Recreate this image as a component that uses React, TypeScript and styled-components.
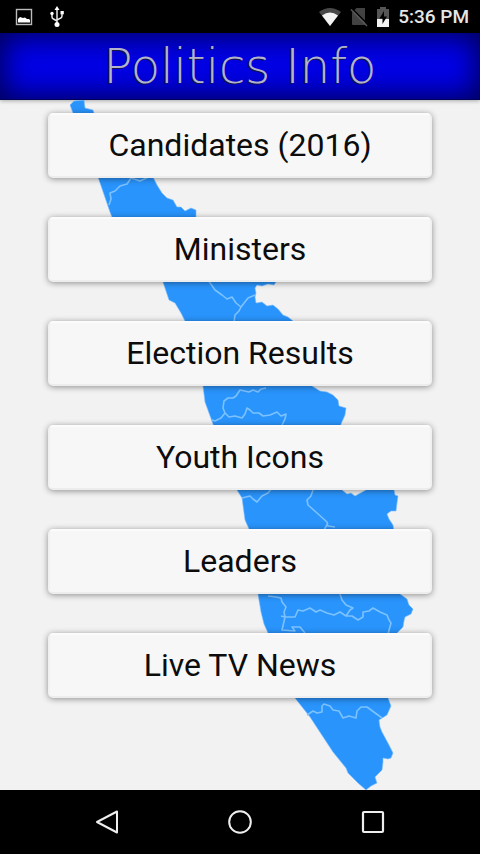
import React from 'react';
import styled, { createGlobalStyle } from 'styled-components';

const GlobalStyle = createGlobalStyle`
  * { box-sizing: border-box; }
  body { margin: 0; background: #f2f2f2; font-family: Roboto, "Liberation Sans", sans-serif; }
`;

const Screen = styled.div`
  display: flex;
  flex-direction: column;
  min-height: 100vh;
`;

const StatusBar = styled.div`
  display: flex;
  align-items: center;
  justify-content: space-between;
  height: 33px;
  padding: 0 11px 0 15px;
  background: #000;
`;

const StatusGroup = styled.div<{ $gap: number }>`
  display: flex;
  align-items: center;
  gap: ${(p) => p.$gap}px;
`;

const Clock = styled.time`
  color: #e6e6e6;
  font-size: 19px;
  font-weight: 500;
  line-height: 24px;
  white-space: nowrap;
`;

const Header = styled.header`
  display: flex;
  align-items: center;
  justify-content: center;
  height: 67px;
  background: #0000e6;
  border-bottom: 1px solid #00005c;
  box-shadow: inset 0 0 28px 4px #000058, 0 1px 4px rgba(0, 0, 0, 0.3);
`;

const Title = styled.h1`
  margin: 0;
  color: #b4b4c8;
  font-family: "DejaVu Sans Light", "DejaVu Sans", sans-serif;
  font-size: 48px;
  font-weight: 200;
  line-height: 56px;
  text-shadow: -1px 1px 0 #14144a;
  white-space: nowrap;
`;

const Main = styled.main`
  position: relative;
  flex: 1;
  padding: 13px 10% 39px;
`;

const MapBackdrop = styled.svg`
  position: absolute;
  inset: 0;
  width: 100%;
  height: 100%;
`;

const Menu = styled.nav`
  position: relative;
  display: flex;
  flex-direction: column;
  gap: 39px;
`;

const MenuButton = styled.button`
  height: 65px;
  padding: 0 16px 2px;
  border: 2px solid;
  border-color: #fcfcfc #f1f1f1 #ededed;
  border-radius: 5px;
  background: #f7f7f7;
  box-shadow: 0 1px 6px rgba(0, 0, 0, 0.42);
  color: #0c0c0c;
  font-family: inherit;
  font-size: 32px;
  line-height: 40px;
`;

const SystemBar = styled.footer`
  display: grid;
  grid-template-columns: repeat(3, 1fr);
  height: 64px;
  padding: 0 40px;
  background: #000;
`;

const SystemButton = styled.button`
  display: flex;
  align-items: center;
  justify-content: center;
  padding: 0;
  border: 0;
  background: none;
`;

const LAND =
  'M70 105L74 101L84 100L85 108L93 110L94 113L108 130L130 145L153 177L157 185L162 193L167 198L173 200L177 207L181 207L185 211L191 208L196 210L196 217L225 245L250 262L276 282L274 285L268 284L262 286L257 285L255 288L256 293L255 297L256 303L262 302L267 306L273 305L278 309L283 315L288 317L293 321L304 350L312 386L320 391L327 392L333 395L338 400L339 406L346 408L345 415L341 424L336 460L342 490L347 494L351 493L355 496L366 490L380 482L394 490L395 495L398 496L397 503L396 511L391 511L387 514L389 519L393 525L394 532L396 560L400 594L407 599L409 605L413 609L411 614L405 617L404 621L403 627L397 633L384 660L388 698L391 706L387 715L379 720L380 727L382 732L389 745L393 753L391 758L388 759L383 758L383 762L382 770L375 777L377 783L371 786L366 790L358 783L348 773L346 768L333 752L310 717L295 698L280 660L268 633L264 624L261 612L258 594L249 529L245 520L242 498L237 490L213 424L205 402L203 386L185 321L181 313L175 303L169 300L163 282L140 245L112 217L110 212L98 177L85 145L73 113Z';

const BORDERS =
  'M153 175L140 181L131 178L127 184L120 186L115 191L110 193L111 199L109 205' +
  'M208 280L215 290L222 295L227 299L232 297L236 303L241 307L239 311L235 315L234 322M241 307L248 298L255 295' +
  'M266 388L261 389L258 392L253 390L249 392L240 390L236 396L233 398L228 398L224 401L223 408L225 413L221 418L215 421L212 420M225 413L229 417L235 416L242 418L245 414L247 408L250 410L253 413L259 413L263 416L270 415L277 412L281 416L286 414L285 419L282 425' +
  'M242 498L250 496L253 499L257 502L262 496L268 493L272 488M313 490L311 496L307 500L308 505L317 513L327 522L328 526L335 527M328 523L324 530' +
  'M268 596L276 597L281 598L282 602L286 607L284 612L285 617L281 616M285 617L282 630L295 631L292 627L300 627L305 633M285 617L295 617L298 610L303 611L310 608L316 612L320 610L327 613L334 615L340 612L346 616L350 610L353 608L346 605L342 600L340 594M346 616L352 616L358 620L363 617L363 612L369 611L373 608L380 612L387 615L389 620L391 623L388 634' +
  'M307 715L313 711L317 713L322 712L322 706L324 704L330 706L333 710L339 711L343 718L349 716L356 718L357 711L361 707L367 707L382 718';

function KeralaMap() {
  return (
    <MapBackdrop viewBox="0 0 480 690" aria-hidden="true">
      <g transform="translate(0 -100)" strokeLinejoin="round">
        <path d={LAND} fill="#2994fc" stroke="#7fc0ff" strokeWidth="0.6" />
        <path d={BORDERS} fill="none" stroke="#7cc2ff" strokeWidth="1.6" />
      </g>
    </MapBackdrop>
  );
}

function PictureIcon() {
  return (
    <svg width="18" height="18" viewBox="0 0 18 18" aria-label="Screenshot saved">
      <rect x="1.5" y="1.5" width="15" height="15" fill="none" stroke="#bbb" strokeWidth="1.4" />
      <path d="M3 14.5V11L5 9L8 10L10 9.5L12 11H14L15 12V14.5Z" fill="#fff" />
    </svg>
  );
}

function UsbIcon() {
  return (
    <svg width="16" height="22" viewBox="0 0 16 22" aria-label="USB connected">
      <g fill="none" stroke="#e8e8e8" strokeWidth="1.5">
        <path d="M8 3V18M3 8V11Q3 12.5 4.500 13L8 15M13 7V10Q13 11.500 11.500 12.200L8 14" />
      </g>
      <path d="M8 0L10.500 4H5.500Z" fill="#fff" />
      <circle cx="3" cy="7.500" r="1.700" fill="#fff" />
      <rect x="11.500" y="5" width="3.300" height="3.300" fill="#fff" />
      <circle cx="8" cy="18.500" r="2.500" fill="#fff" />
    </svg>
  );
}

function WifiIcon() {
  return (
    <svg width="24" height="20" viewBox="0 0 24 20" aria-label="Wi-Fi">
      <path d="M1 5Q12 -3 23 5L12 19Z" fill="#484848" />
      <path d="M4 8.500Q12 2.500 20 8.500L12 19Z" fill="#f4f4f4" />
    </svg>
  );
}

function NoSimIcon() {
  return (
    <svg width="18" height="20" viewBox="0 0 18 20" aria-label="No SIM card">
      <path d="M6.500 1H15V18H3Q2 18 2 17V5.500Z" fill="#424242" />
      <path d="M2 1.500L18 17.500" stroke="#000" strokeWidth="1.5" />
      <path d="M1 2.500L17 19" stroke="#585858" strokeWidth="1.5" />
    </svg>
  );
}

function BatteryIcon() {
  return (
    <svg width="14" height="20" viewBox="0 0 14 20" aria-label="Battery charging">
      <path d="M4 0H10V2H13V12H1V2H4Z" fill="#555" />
      <path d="M1 12H13V20H1Z" fill="#f2f2f2" />
      <path d="M8 4L3.500 11.500H6.500V17L11 9.500H8Z" fill="#000" />
    </svg>
  );
}

const ITEMS = ['Candidates (2016)', 'Ministers', 'Election Results', 'Youth Icons', 'Leaders', 'Live TV News'];

export default function App() {
  return (
    <>
      <GlobalStyle />
      <Screen>
        <StatusBar>
          <StatusGroup $gap={16}>
            <PictureIcon />
            <UsbIcon />
          </StatusGroup>
          <StatusGroup $gap={8}>
            <WifiIcon />
            <NoSimIcon />
            <BatteryIcon />
            <Clock>5:36 PM</Clock>
          </StatusGroup>
        </StatusBar>
        <Header>
          <Title>Politics Info</Title>
        </Header>
        <Main>
          <KeralaMap />
          <Menu>
            {ITEMS.map((item) => (
              <MenuButton key={item} type="button">
                {item}
              </MenuButton>
            ))}
          </Menu>
        </Main>
        <SystemBar>
          <SystemButton type="button" aria-label="Back">
            <svg width="24" height="24" viewBox="0 0 24 24">
              <path d="M2 12L22 1.500V22.500Z" fill="none" stroke="#eee" strokeWidth="2" strokeLinejoin="round" />
            </svg>
          </SystemButton>
          <SystemButton type="button" aria-label="Home">
            <svg width="24" height="24" viewBox="0 0 24 24">
              <circle cx="12" cy="12" r="10.800" fill="none" stroke="#eee" strokeWidth="2" />
            </svg>
          </SystemButton>
          <SystemButton type="button" aria-label="Recent apps">
            <svg width="24" height="24" viewBox="0 0 24 24">
              <rect x="2" y="2" width="20" height="20" rx="1" fill="none" stroke="#eee" strokeWidth="2.2" />
            </svg>
          </SystemButton>
        </SystemBar>
      </Screen>
    </>
  );
}
